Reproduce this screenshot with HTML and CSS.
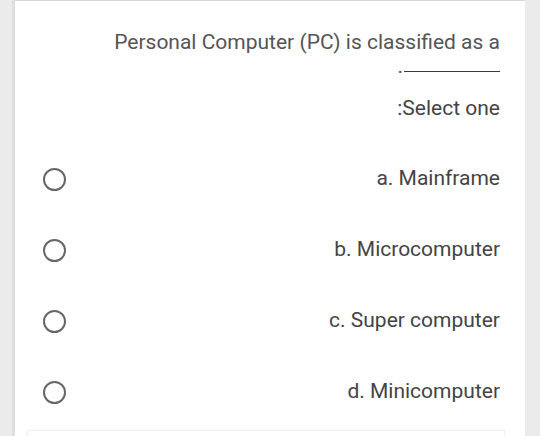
FILE: index.html
```html
<!DOCTYPE html>
<html>
<head>
<meta charset="utf-8">
<link rel="stylesheet" href="styles.css">
</head>
<body>
<div class="page">
  <div class="card">
    <div class="topband"></div>
    <div class="content">
      <div class="question">
        <div class="qline">Personal Computer (PC) is classified as a</div>
        <div class="qline"><span class="dot">.</span><span class="blank"></span></div>
      </div>
      <div class="prompt">:Select one</div>
      <div class="options">
        <div class="opt"><span class="radio"></span><span class="label">a. Mainframe</span></div>
        <div class="opt"><span class="radio"></span><span class="label">b. Microcomputer</span></div>
        <div class="opt"><span class="radio"></span><span class="label">c. Super computer</span></div>
        <div class="opt"><span class="radio"></span><span class="label">d. Minicomputer</span></div>
      </div>
      <div class="nextbox"></div>
    </div>
  </div>
</div>
</body>
</html>
```

FILE: styles.css
```css
html, body {
  margin: 0;
  padding: 0;
  background: #ebebeb;
  height: 100%;
  overflow: hidden;
}
.page {
  display: flex;
  height: 436px;
  padding-left: 12px;
}
.card {
  width: 510px;
  border-left: 3px solid #dedede;
  background: #ffffff;
  display: flex;
  flex-direction: column;
  font-family: Roboto, "Liberation Sans", sans-serif;
}
.topband {
  height: 8px;
  background: #eeeeee;
  border-bottom: 1px solid #d6d6d6;
}
.content {
  padding: 29px 25px 0 12px;
  display: flex;
  flex-direction: column;
}
.question {
  color: #555555;
  font-size: 21px;
  line-height: 24px;
  text-align: right;
}
.qline {
  display: flex;
  justify-content: flex-end;
  align-items: baseline;
}
.dot {
  margin-right: 1px;
}
.blank {
  display: inline-block;
  width: 96px;
  border-bottom: 1px solid #3a3a3a;
  transform: translateY(-1px);
}
.prompt {
  margin-top: 18px;
  color: #444444;
  font-size: 21px;
  line-height: 24px;
  text-align: right;
}
.options {
  margin-top: 22px;
  display: flex;
  flex-direction: column;
}
.opt {
  height: 71px;
  display: flex;
  align-items: center;
  justify-content: space-between;
}
.radio {
  width: 23px;
  height: 23px;
  box-sizing: border-box;
  border: 2.5px solid #666666;
  border-radius: 50%;
  margin-left: 16px;
  margin-top: 3px;
}
.label {
  color: #444444;
  font-size: 21px;
  line-height: 24px;
}
.nextbox {
  margin-top: 4px;
  margin-right: -5px;
  height: 20px;
  border: 1px solid #f1f1f1;
  box-shadow: 0 0 3px rgba(0,0,0,0.05);
}
```
